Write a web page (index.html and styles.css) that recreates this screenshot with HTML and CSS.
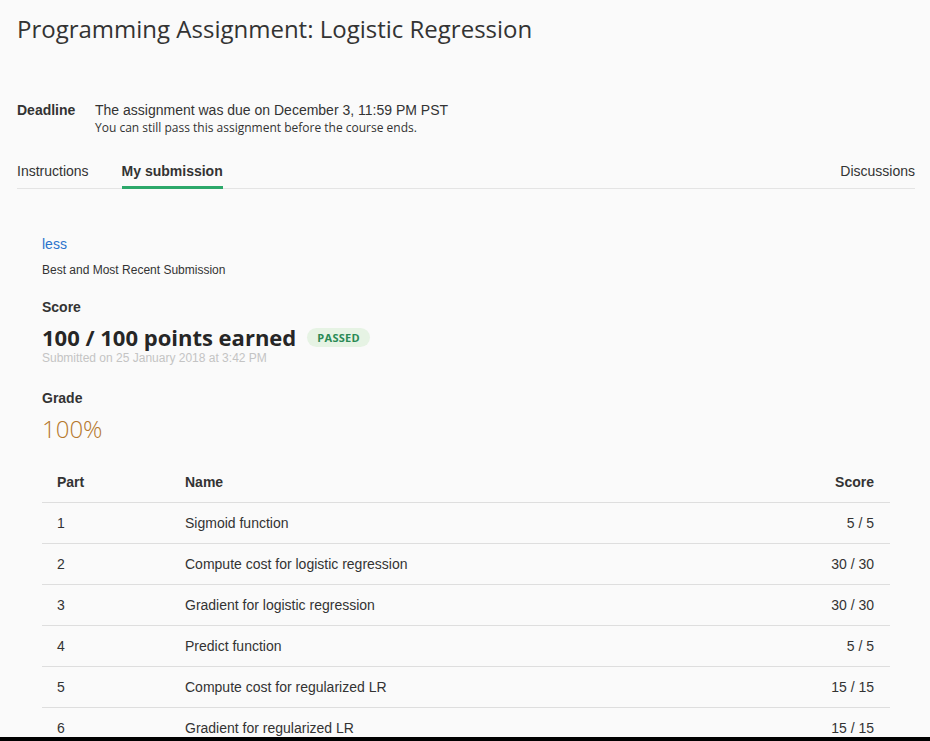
FILE: index.html
```html
<!DOCTYPE html>
<html lang="en">
<head>
<meta charset="utf-8">
<title>Programming Assignment: Logistic Regression</title>
<link rel="stylesheet" href="styles.css">
</head>
<body>
<div class="page">
  <h1 class="title">Programming Assignment: Logistic Regression</h1>

  <div class="deadline">
    <div class="deadline-label">Deadline</div>
    <div class="deadline-body">
      <div class="deadline-main">The assignment was due on December 3, 11:59 PM PST</div>
      <div class="deadline-sub">You can still pass this assignment before the course ends.</div>
    </div>
  </div>

  <nav class="tabs">
    <a class="tab">Instructions</a>
    <a class="tab active">My submission</a>
    <span class="tabs-spacer"></span>
    <a class="tab">Discussions</a>
  </nav>

  <section class="submission">
    <a class="less">less</a>
    <div class="best">Best and Most Recent Submission</div>

    <div class="label score-label">Score</div>
    <div class="score-row">
      <span class="points">100 / 100 points earned</span>
      <span class="badge">PASSED</span>
    </div>
    <div class="submitted">Submitted on 25 January 2018 at 3:42 PM</div>

    <div class="label grade-label">Grade</div>
    <div class="grade">100%</div>

    <table class="parts">
      <thead>
        <tr><th class="c-part">Part</th><th class="c-name">Name</th><th class="c-score">Score</th></tr>
      </thead>
      <tbody>
        <tr><td class="c-part">1</td><td class="c-name">Sigmoid function</td><td class="c-score">5 / 5</td></tr>
        <tr><td class="c-part">2</td><td class="c-name">Compute cost for logistic regression</td><td class="c-score">30 / 30</td></tr>
        <tr><td class="c-part">3</td><td class="c-name">Gradient for logistic regression</td><td class="c-score">30 / 30</td></tr>
        <tr><td class="c-part">4</td><td class="c-name">Predict function</td><td class="c-score">5 / 5</td></tr>
        <tr><td class="c-part">5</td><td class="c-name">Compute cost for regularized LR</td><td class="c-score">15 / 15</td></tr>
        <tr><td class="c-part">6</td><td class="c-name">Gradient for regularized LR</td><td class="c-score">15 / 15</td></tr>
      </tbody>
    </table>
  </section>
</div>
<div class="bottom-bar"></div>
</body>
</html>
```

FILE: styles.css
```css
html, body {
  margin: 0;
  padding: 0;
  background: #fafafa;
}
body {
  font-family: "Liberation Sans", Arial, sans-serif;
  color: #333;
  font-size: 14px;
}
.page {
  padding: 0 15px 0 17px;
}
.title {
  margin: 0;
  padding-top: 12px;
  font-family: "Open Sans", sans-serif;
  font-weight: 400;
  font-size: 24px;
  line-height: 34px;
  color: #333;
}
.deadline {
  display: flex;
  margin-top: 55px;
}
.deadline-label {
  width: 78px;
  font-weight: bold;
  line-height: 18px;
  color: #333;
}
.deadline-main {
  line-height: 18px;
}
.deadline-sub {
  font-family: "Open Sans", sans-serif;
  font-size: 12px;
  line-height: 18px;
  color: #333;
}
.tabs {
  display: flex;
  margin-top: 21px;
  border-bottom: 1px solid #e4e4e4;
}
.tab {
  display: block;
  padding: 5px 0 6px;
  line-height: 17px;
  color: #333;
  border-bottom: 3px solid transparent;
  margin-bottom: -1px;
  margin-right: 33px;
}
.tab:last-child { margin-right: 0; }
.tab.active {
  font-weight: bold;
  border-bottom-color: #2ca86a;
}
.tabs-spacer { flex: 1; }
.submission {
  padding: 46px 25px 0 25px;
}
.less {
  display: block;
  color: #2a73cc;
  line-height: 18px;
}
.best {
  font-size: 12px;
  margin-top: 10px;
  line-height: 15px;
}
.label {
  font-weight: bold;
  line-height: 18px;
}
.score-label { margin-top: 20px; }
.score-row {
  display: flex;
  align-items: center;
  margin-top: 9px;
  height: 24px;
}
.points {
  font-family: "Open Sans", sans-serif;
  font-weight: 700;
  font-size: 22px;
  line-height: 24px;
  color: #262626;
}
.badge {
  margin-left: 11px;
  background: #e6f3e4;
  color: #2a8a55;
  font-family: "Open Sans", sans-serif;
  font-weight: 700;
  font-size: 11px;
  letter-spacing: 0.3px;
  line-height: 19px;
  padding: 0 10px;
  border-radius: 10px;
}
.submitted {
  font-size: 12px;
  color: #c4c4c4;
  line-height: 14px;
  margin-top: 2px;
}
.grade-label { margin-top: 24px; }
.grade {
  font-family: "Open Sans", sans-serif;
  font-weight: 300;
  font-size: 24px;
  line-height: 30px;
  color: #b5782c;
  margin-top: 7px;
}
.parts {
  width: 100%;
  border-collapse: collapse;
  margin-top: 18px;
}
.parts th, .parts td {
  height: 40px;
  padding: 0 16px 0 15px;
  text-align: left;
  border-bottom: 1px solid #dedede;
  vertical-align: middle;
}
.parts th {
  font-weight: bold;
  color: #333;
}
.parts td { color: #333; }
.c-part { width: 97px; }
.parts .c-score { text-align: right; }
.bottom-bar {
  position: fixed;
  left: 0;
  right: 0;
  bottom: 0;
  height: 4px;
  background: #000;
}
```
